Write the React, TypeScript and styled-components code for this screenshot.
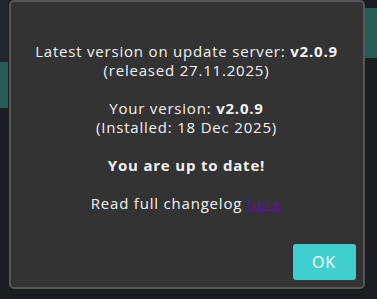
import React from "react";
import styled, { createGlobalStyle } from "styled-components";

const Global = createGlobalStyle`
  html, body { margin: 0; padding: 0; background: #1c1d20; }
  body { width: 377px; height: 299px; overflow: hidden; font-family: "Open Sans", "DejaVu Sans", sans-serif; }
`;

const Page = styled.div`
  position: relative;
  width: 377px;
  height: 299px;
  display: flex;
  justify-content: space-between;
  background: #1c1d20;
`;

const Side = styled.div<{ $top: number; $w: number }>`
  width: ${(p) => p.$w}px;
  display: flex;
  flex-direction: column;
  padding-top: ${(p) => p.$top}px;
`;

const DarkBlock = styled.div<{ $h: number }>`
  height: ${(p) => p.$h}px;
  background: #22272b;
`;

const TealBlock = styled.div<{ $h: number }>`
  height: ${(p) => p.$h}px;
  background: #275c57;
`;

const Overlay = styled.div`
  position: absolute;
  inset: 0;
  display: flex;
  justify-content: center;
  align-items: flex-start;
`;

const Dialog = styled.div`
  box-sizing: border-box;
  width: 356px;
  height: 289px;
  margin-left: -4px;
  background: #333333;
  border: 2px solid #575757;
  border-radius: 5px;
  display: flex;
  flex-direction: column;
  color: #f2f2f2;
`;

const Body = styled.div`
  flex: 1;
  display: flex;
  flex-direction: column;
  align-items: center;
  gap: 19px;
  padding-top: 40px;
  text-align: center;
  font-size: 15px;
  line-height: 19px;
  letter-spacing: 0.8px;
`;

const Para = styled.p`
  margin: 0;
  white-space: nowrap;
`;

const Link = styled.a`
  color: #551a8b;
  text-decoration: underline;
`;

const Footer = styled.div`
  display: flex;
  justify-content: flex-end;
  padding: 0 7px 7px 0;
`;

const OkButton = styled.button`
  width: 63px;
  height: 36px;
  border: none;
  border-radius: 3px;
  background: #3fcfcf;
  color: #ffffff;
  font-family: "Open Sans", sans-serif;
  font-size: 16px;
  letter-spacing: 0.8px;
`;

export default function App() {
  return (
    <>
      <Global />
      <Page>
        <Side $top={0} $w={8}>
          <DarkBlock $h={62} />
          <TealBlock $h={46} />
        </Side>
        <Side $top={8} $w={12}>
          <TealBlock $h={50} />
        </Side>
        <Overlay>
          <Dialog>
            <Body>
              <Para>
                Latest version on update server: <b>v2.0.9</b>
                <br />
                (released 27.11.2025)
              </Para>
              <Para>
                Your version: <b>v2.0.9</b>
                <br />
                (Installed: 18 Dec 2025)
              </Para>
              <Para>
                <b>You are up to date!</b>
              </Para>
              <Para>
                Read full changelog <Link href="#">here</Link>
              </Para>
            </Body>
            <Footer>
              <OkButton>OK</OkButton>
            </Footer>
          </Dialog>
        </Overlay>
      </Page>
    </>
  );
}
